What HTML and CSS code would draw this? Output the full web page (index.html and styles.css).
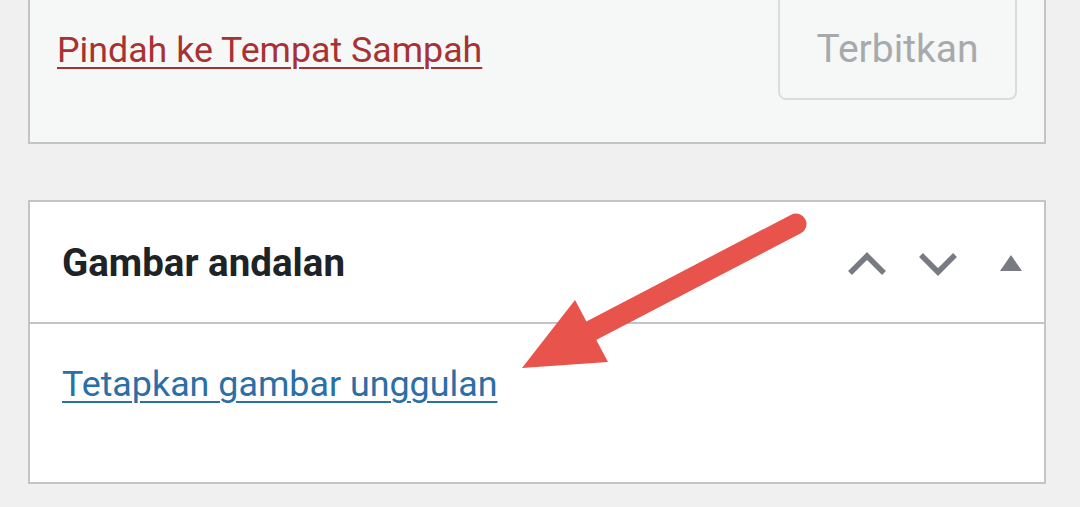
FILE: index.html
```html
<!DOCTYPE html>
<html lang="id">
<head>
  <meta charset="UTF-8" />
  <meta name="viewport" content="width=device-width, initial-scale=1.0"/>
  <title>Gambar andalan</title>
  <link rel="stylesheet" href="styles.css">
</head>
<body>

  <div class="publish-box">
    <a href="#" class="trash-link">Pindah ke Tempat Sampah</a>
    <button class="publish-btn" disabled>Terbitkan</button>
  </div>

  <div class="postbox">
    <div class="postbox-header">
      <h2>Gambar andalan</h2>
      <div class="handle-actions">
        <button class="handle up" aria-label="Pindah ke atas">
          <svg width="40" height="28" viewBox="0 0 40 28"><path d="M3 22 L20 5 L37 22" fill="none" stroke="#787c82" stroke-width="5.5"/></svg>
        </button>
        <button class="handle down" aria-label="Pindah ke bawah">
          <svg width="40" height="28" viewBox="0 0 40 28"><path d="M3 4 L20 21 L37 4" fill="none" stroke="#787c82" stroke-width="5.5"/></svg>
        </button>
        <button class="handle toggle" aria-label="Ciutkan panel">
          <svg width="22" height="28" viewBox="0 0 22 28"><path d="M11 4 L22 20 L0 20 Z" fill="#787c82"/></svg>
        </button>
      </div>
    </div>
    <div class="postbox-inside">
      <a href="#" class="set-thumb">Tetapkan gambar unggulan</a>
    </div>
  </div>

  <!-- annotation arrow -->
  <svg class="annotation" width="1080" height="507" viewBox="0 0 1080 507">
    <line x1="796" y1="224" x2="585" y2="334" stroke="#e8534b" stroke-width="21" stroke-linecap="round"/>
    <polygon points="522,368 575,300 608,362" fill="#e8534b"/>
  </svg>

</body>
</html>
```

FILE: styles.css
```css
body {
  margin: 0;
  background-color: #f0f0f1;
  font-family: Roboto, "Noto Sans", Arial, sans-serif;
  color: #1d2327;
  position: relative;
  height: 507px;
  overflow: hidden;
}

.publish-box {
  margin-left: 28px;
  width: 1018px;
  box-sizing: border-box;
  height: 144px;
  background-color: #f6f7f7;
  border: 2px solid #c3c4c7;
  border-top: none;
  display: flex;
  justify-content: space-between;
  align-items: flex-start;
  padding: 0 27px 0 27px;
}

.trash-link {
  margin-top: 26px;
  font-size: 35.75px;
  line-height: 49px;
  color: #a83232;
  text-decoration: underline;
  text-decoration-thickness: 2px;
  text-underline-offset: 5px;
}

.publish-btn {
  width: 239px;
  height: 100px;
  box-sizing: border-box;
  padding: 0;
  font-family: inherit;
  font-size: 39px;
  line-height: 49px;
  color: #a7aaad;
  background-color: #f6f7f7;
  border: 2px solid #dcdcde;
  border-top: none;
  border-radius: 0 0 8px 8px;
}

.postbox {
  margin: 56px 0 0 28px;
  width: 1018px;
  box-sizing: border-box;
  background-color: #fff;
  border: 2px solid #c3c4c7;
}

.postbox-header {
  height: 120px;
  display: flex;
  align-items: center;
  justify-content: space-between;
  border-bottom: 2px solid #c3c4c7;
  padding: 0 22px 0 32px;
}

.postbox-header h2 {
  margin: 0;
  font-size: 38.5px;
  font-weight: 700;
  color: #1d2327;
}

.handle-actions {
  display: flex;
  align-items: center;
  margin-top: 6px;
}

.handle {
  background: none;
  border: none;
  padding: 0;
  display: flex;
}

.handle.down {
  margin-left: 31px;
}

.handle.toggle {
  margin-left: 42px;
}

.postbox-inside {
  height: 158px;
  box-sizing: border-box;
  padding: 36px 32px 0;
}

.set-thumb {
  font-size: 35.85px;
  line-height: 49px;
  color: #2a6fa6;
  text-decoration: underline;
  text-decoration-thickness: 2px;
  text-underline-offset: 5px;
}

.annotation {
  position: absolute;
  left: 0;
  top: 0;
  pointer-events: none;
}
```
